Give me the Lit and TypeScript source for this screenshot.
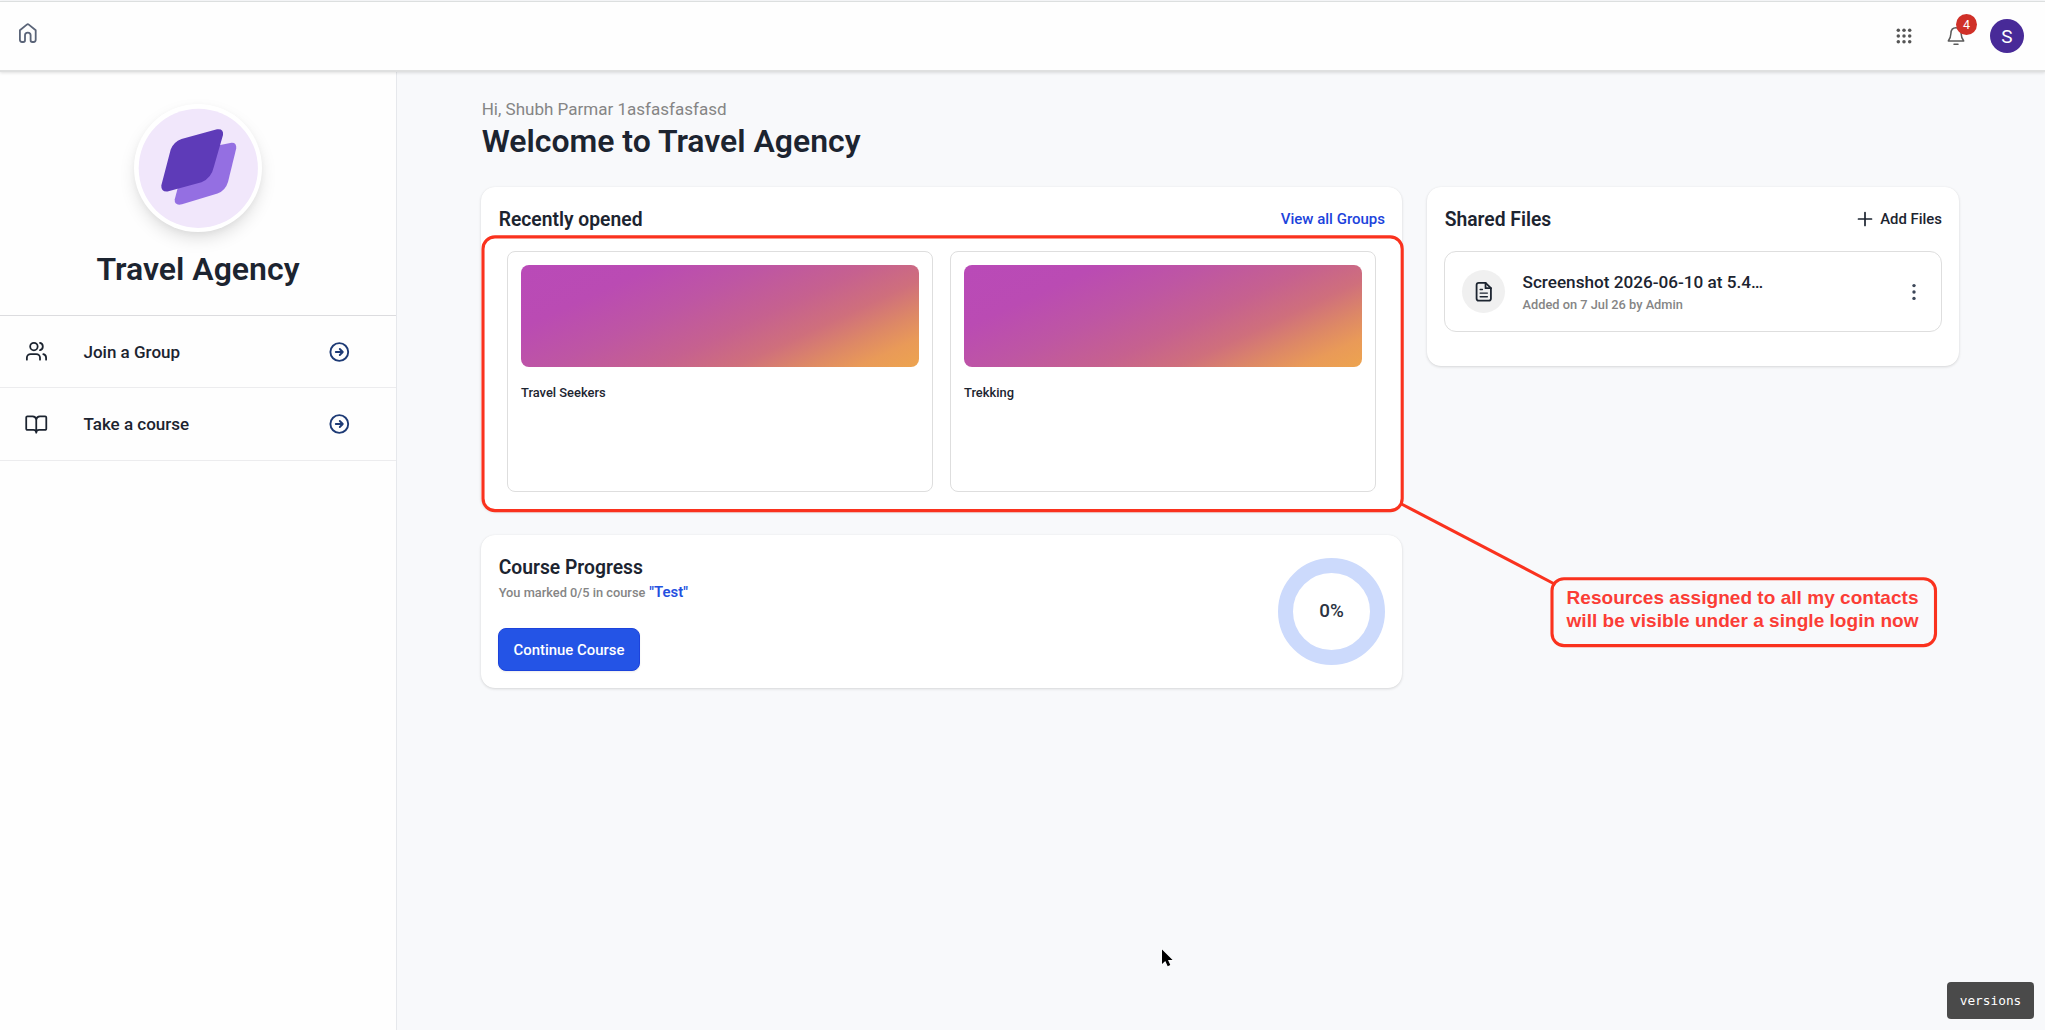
import { LitElement, html, css, svg } from "lit";
import { customElement, property } from "lit/decorators.js";

const icons = {
  users: svg`<path d="M16 21v-2a4 4 0 0 0-4-4H6a4 4 0 0 0-4 4v2"/><circle cx="9.5" cy="7" r="4"/><path d="M22.5 21v-2a4 4 0 0 0-3-3.87"/><path d="M16 3.13a4 4 0 0 1 0 7.75"/>`,
  book: svg`<path d="M12 20.5V7a4 4 0 0 0-4-3.5H2.5A1.2 1.2 0 0 0 1.3 4.7v12.1A1.2 1.2 0 0 0 2.5 18H9a3 3 0 0 1 3 3 3 3 0 0 1 3-3h6.5a1.2 1.2 0 0 0 1.2-1.2V4.7a1.2 1.2 0 0 0-1.2-1.2H16A4 4 0 0 0 12 7"/>`,
};

@customElement("side-item")
export class SideItem extends LitElement {
  @property() label = "";
  @property() icon: "users" | "book" = "users";

  static styles = css`
    :host { display: block; }
    .row { display: flex; align-items: center; height: 71.4px; padding: 0 46px 0 25px; border-bottom: 1px solid #ececee; }
    .lead { width: 22.5px; height: 22.5px; margin-right: 36px; }
    .label { flex: 1; font-size: 17px; line-height: 24px; font-weight: 540; color: #1c2430; }
    .go { width: 22px; height: 22px; }
  `;

  render() {
    return html`<div class="row">
      <svg class="lead" viewBox="0 0 24 24" fill="none" stroke="#1c2430" stroke-width="1.9" stroke-linecap="round" stroke-linejoin="round">${icons[this.icon]}</svg>
      <span class="label">${this.label}</span>
      <svg class="go" viewBox="0 0 22 22" fill="none" stroke="#1d3a75" stroke-width="1.9" stroke-linecap="round" stroke-linejoin="round">
        <circle cx="11.3" cy="11" r="8.9"/><path d="M7.8 11h7M11.8 8l3 3-3 3"/>
      </svg>
    </div>`;
  }
}

@customElement("group-tile")
export class GroupTile extends LitElement {
  @property() name = "";

  static styles = css`
    :host { display: block; flex: 1; }
    .tile { box-sizing: border-box; height: 241px; padding: 13px; border: 1px solid #dedede; border-radius: 8px; background: #fff; }
    .cover { height: 102px; border-radius: 8px;
      background: linear-gradient(155deg, #b94ab8 0%, #ba4bb3 22%, #be56a3 40%, #c6618f 57%, #cf6f7c 70%, #dd8866 81%, #e99a58 90%, #eda44f 100%); }
    .name { margin-top: 17px; font-size: 12.9px; line-height: 18px; font-weight: 540; color: #1c2430; }
  `;

  render() {
    return html`<div class="tile"><div class="cover"></div><div class="name">${this.name}</div></div>`;
  }
}

@customElement("app-root")
export class AppRoot extends LitElement {
  static styles = css`
    :host { display: block; position: relative; width: 2045px; height: 1030px; overflow: hidden; background: #f8f9fb; color: #1c2430; font-family: Roboto, sans-serif; }
    * { box-sizing: border-box; }
    .page { display: flex; flex-direction: column; height: 1030px; background: #f8f9fb; }
    .top { position: relative; z-index: 1; display: flex; align-items: center; height: 71px; margin-top: 1px; padding: 0 21px 0 18px; background: #fefefe; border-top: 1px solid #dcdfdf; border-bottom: 2px solid #dfe0e0; box-shadow: 0 1px 3px rgba(0, 0, 0, .12); }
    .home { width: 20px; height: 22px; margin-top: -6px; }
    .tools { display: flex; align-items: center; margin-left: auto; }
    .grid { width: 18px; height: 18px; margin-right: 34px; }
    .bell { position: relative; width: 18px; height: 20px; margin-right: 25px; }
    .bell svg { display: block; width: 18px; height: 20px; }
    .count { position: absolute; left: 9px; top: -12px; width: 21px; height: 21px; border-radius: 50%; background: #d03028; color: #fff; font-size: 12.5px; line-height: 21.5px; text-align: center; }
    .avatar { width: 34px; height: 34px; border-radius: 50%; background: #482a98; color: #fff; font-size: 19px; line-height: 35px; text-align: center; }
    .body { display: flex; flex: 1; }
    .side { width: 397px; background: #fefefe; border-right: 1px solid #e6e8ec; }
    .brand { display: flex; flex-direction: column; align-items: center; height: 244px; padding-top: 32px; border-bottom: 1px solid #dcdcdf; }
    .logo { width: 128px; height: 128px; border-radius: 50%; background: #fff; box-shadow: 0 8px 18px -3px rgba(0, 0, 0, .15), 0 2px 6px rgba(0, 0, 0, .03); }
    .logo svg { display: block; width: 128px; height: 128px; }
    .brand-name { margin-top: 17px; font-size: 32px; line-height: 40px; font-weight: 600; }
    .main { flex: 1; padding: 25px 86px 0 84px; }
    .hi { padding-left: .7px; font-size: 17.05px; line-height: 24px; color: #858585; }
    .welcome { margin: 0 0 26px; padding-left: .7px; font-size: 31.95px; line-height: 40px; font-weight: 600; }
    .cols { display: flex; align-items: flex-start; gap: 25px; }
    .left { display: flex; flex-direction: column; gap: 24px; width: 921px; }
    .card { background: #fff; border-radius: 14px; box-shadow: 0 1px 3px rgba(0, 0, 0, .14), 0 0 1px rgba(0, 0, 0, .06); }
    .head { display: flex; align-items: center; justify-content: space-between; height: 28px; }
    .title { padding-left: .7px; font-size: 19.3px; line-height: 28px; font-weight: 570; }
    .head .title { padding-top: 2px; }
    .link { font-size: 15px; line-height: 24px; font-weight: 540; color: #1c43dc; }
    .recent { height: 324px; padding: 18px 17px 0 17px; }
    .tiles { display: flex; gap: 17px; padding: 18px 9px 0 9px; }
    .course { display: flex; justify-content: space-between; align-items: center; height: 153px; padding: 0 17px; }
    .course-info { display: flex; flex-direction: column; align-items: flex-start; padding-top: 1px; }
    .sub { display: flex; align-items: baseline; gap: 4px; margin-bottom: 25px; padding-left: .7px; font-size: 12.8px; line-height: 21px; font-weight: 500; color: #858585; }
    .course-name { font-size: 14.9px; font-weight: 570; color: #2350e0; }
    .btn { width: 142px; height: 43px; border: 1px solid #1c43dc; border-radius: 8px; background: #2454e6; color: #fff; font-size: 14.9px; line-height: 42px; font-weight: 500; text-align: center; box-shadow: 0 1px 2px rgba(0, 0, 0, .08); }
    .ring { display: flex; align-items: center; justify-content: center; width: 107px; height: 107px; padding-bottom: 2px; border: 15px solid #ccdafc; border-radius: 50%; font-size: 18.8px; line-height: 24px; font-weight: 500; color: #2b3342; }
    .files { width: 532px; height: 179px; padding: 18px 17px 0; }
    .add { display: flex; align-items: center; gap: 7px; font-size: 14.9px; line-height: 24px; font-weight: 500; }
    .add svg { width: 16px; height: 16px; }
    .file { display: flex; align-items: center; height: 81px; margin-top: 18px; padding: 0 18.5px 0 17px; border: 1px solid #dedede; border-radius: 12px; }
    .file-icon { display: flex; align-items: center; justify-content: center; width: 43px; height: 43px; margin-right: 17.5px; border-radius: 50%; background: #f0f0f0; }
    .file-icon svg { width: 21.5px; height: 21.5px; }
    .file-text { flex: 1; padding-top: 2px; }
    .file-name { font-size: 17.15px; line-height: 23px; font-weight: 540; }
    .file-meta { font-size: 12.8px; line-height: 21px; font-weight: 500; color: #858585; }
    .more { width: 18px; height: 18px; }
    .notes { position: absolute; z-index: 3; left: 0; top: 0; width: 2045px; height: 1030px; pointer-events: none; }
    .note-text { font: bold 19px "Liberation Sans", Arial, sans-serif; fill: #fb3d36; }
    .versions { position: absolute; z-index: 2; right: 11px; bottom: 11px; width: 87px; height: 37px; border-radius: 4px; background: #4a4a4a; color: #fff; font: 12.8px/37px "DejaVu Sans Mono", monospace; text-align: center; }
  `;

  render() {
    const dots = [3.3, 9, 14.7];
    return html`
      <div class="page">
        <header class="top">
          <svg class="home" viewBox="0 0 20 22" fill="none" stroke="#5a6478" stroke-width="1.8" stroke-linejoin="round" stroke-linecap="round">
            <path d="M1.9 8.3 8.8 2.6q1-.8 2 0L17.7 8.3V17.8q0 2.2-2.2 2.2H14.3q-1.7 0-1.7-1.7V13.3q0-2.6-2.8-2.6t-2.8 2.6V18.3q0 1.7-1.7 1.7H4.1q-2.2 0-2.2-2.2z"/>
          </svg>
          <div class="tools">
            <svg class="grid" viewBox="0 0 18 18" fill="#555">
              ${dots.map((y) => dots.map((x) => svg`<circle cx=${x} cy=${y} r="1.75"/>`))}
            </svg>
            <div class="bell">
              <svg viewBox="0 0 18 20" fill="none" stroke="#5a5a5a" stroke-width="1.5" stroke-linecap="round" stroke-linejoin="round">
                <path d="M9 1.8C5.6 1.8 4 4.2 3.9 7.5 3.8 11 3.2 12.5 1.3 15h15.4C14.8 12.5 14.2 11 14.1 7.5 14 4.2 12.4 1.8 9 1.8z"/><path d="M7 18.2h4"/>
              </svg>
              <span class="count">4</span>
            </div>
            <div class="avatar">S</div>
          </div>
        </header>
        <div class="body">
          <aside class="side">
            <div class="brand">
              <div class="logo">
                <svg viewBox="134 104 128 128">
                  <circle cx="198.3" cy="168.3" r="59.6" fill="#f1e7fb"/>
                  <path fill="#946fe2" d="M219 145.3 231.5 142.8Q236.8 142.5 236.2 148.5L228 182Q225.5 190.5 217.5 193.5L182 204.3Q174.3 206 174.7 199.5L178 187z"/>
                  <path fill="#5e3bb8" d="M181.5 139 217 129.3Q223.8 128.3 223 135L213.8 167Q211.5 178 201.5 182.3L167.5 191.5Q161 192 161.3 185.5L170.7 149.5Q173.5 142 181.5 139z"/>
                </svg>
              </div>
              <div class="brand-name">Travel Agency</div>
            </div>
            <side-item label="Join a Group" icon="users"></side-item>
            <side-item label="Take a course" icon="book"></side-item>
          </aside>
          <main class="main">
            <div class="hi">Hi, Shubh Parmar 1asfasfasfasd</div>
            <h1 class="welcome">Welcome to Travel Agency</h1>
            <div class="cols">
              <div class="left">
                <section class="card recent">
                  <div class="head"><span class="title">Recently opened</span><span class="link">View all Groups</span></div>
                  <div class="tiles">
                    <group-tile name="Travel Seekers"></group-tile>
                    <group-tile name="Trekking"></group-tile>
                  </div>
                </section>
                <section class="card course">
                  <div class="course-info">
                    <span class="title">Course Progress</span>
                    <div class="sub">You marked 0/5 in course <span class="course-name">"Test"</span></div>
                    <div class="btn">Continue Course</div>
                  </div>
                  <div class="ring">0%</div>
                </section>
              </div>
              <section class="card files">
                <div class="head">
                  <span class="title">Shared Files</span>
                  <span class="add">
                    <svg viewBox="0 0 16 16" stroke="#1c2430" stroke-width="1.7" stroke-linecap="round"><path d="M8 1.5v13M1.5 8h13"/></svg>
                    Add Files
                  </span>
                </div>
                <div class="file">
                  <div class="file-icon">
                    <svg viewBox="0 0 24 24" fill="none" stroke="#1c2430" stroke-width="2" stroke-linecap="round" stroke-linejoin="round">
                      <path d="M14 2H6.5A2.5 2.5 0 0 0 4 4.5v15A2.5 2.5 0 0 0 6.5 22h11a2.5 2.5 0 0 0 2.5-2.5V8z"/><path d="M14 2v6h6"/>
                      <path stroke-width="1.6" d="M8 9.5h2.5M8 13.5h8M8 17.5h8"/>
                    </svg>
                  </div>
                  <div class="file-text">
                    <div class="file-name">Screenshot 2026-06-10 at 5.4…</div>
                    <div class="file-meta">Added on 7 Jul 26 by Admin</div>
                  </div>
                  <svg class="more" viewBox="0 0 18 18" fill="#3c4658">
                    <circle cx="9" cy="2.6" r="1.7"/><circle cx="9" cy="9" r="1.7"/><circle cx="9" cy="15.4" r="1.7"/>
                  </svg>
                </div>
              </section>
            </div>
          </main>
        </div>
      </div>
      <div class="versions">versions</div>
      <svg class="notes" viewBox="0 0 2045 1030" fill="none">
        <g stroke="#fa321e" stroke-width="3.1">
          <rect x="483" y="236.9" width="919.2" height="273.7" rx="12"/>
          <path d="M1401.5 504 1554.5 584"/>
          <rect x="1552" y="578.7" width="383.5" height="66.9" rx="12"/>
        </g>
        <text class="note-text" x="1566.5" y="604" textLength="352">Resources assigned to all my contacts</text>
        <text class="note-text" x="1566.5" y="627" textLength="352">will be visible under a single login now</text>
        <path d="M1162 949.5v14.5l3.3-3 2.4 5.2 2.6-1.2-2.3-4.9h4.6z" fill="#000" stroke="#fff" stroke-width="1.2" paint-order="stroke"/>
      </svg>
    `;
  }
}
